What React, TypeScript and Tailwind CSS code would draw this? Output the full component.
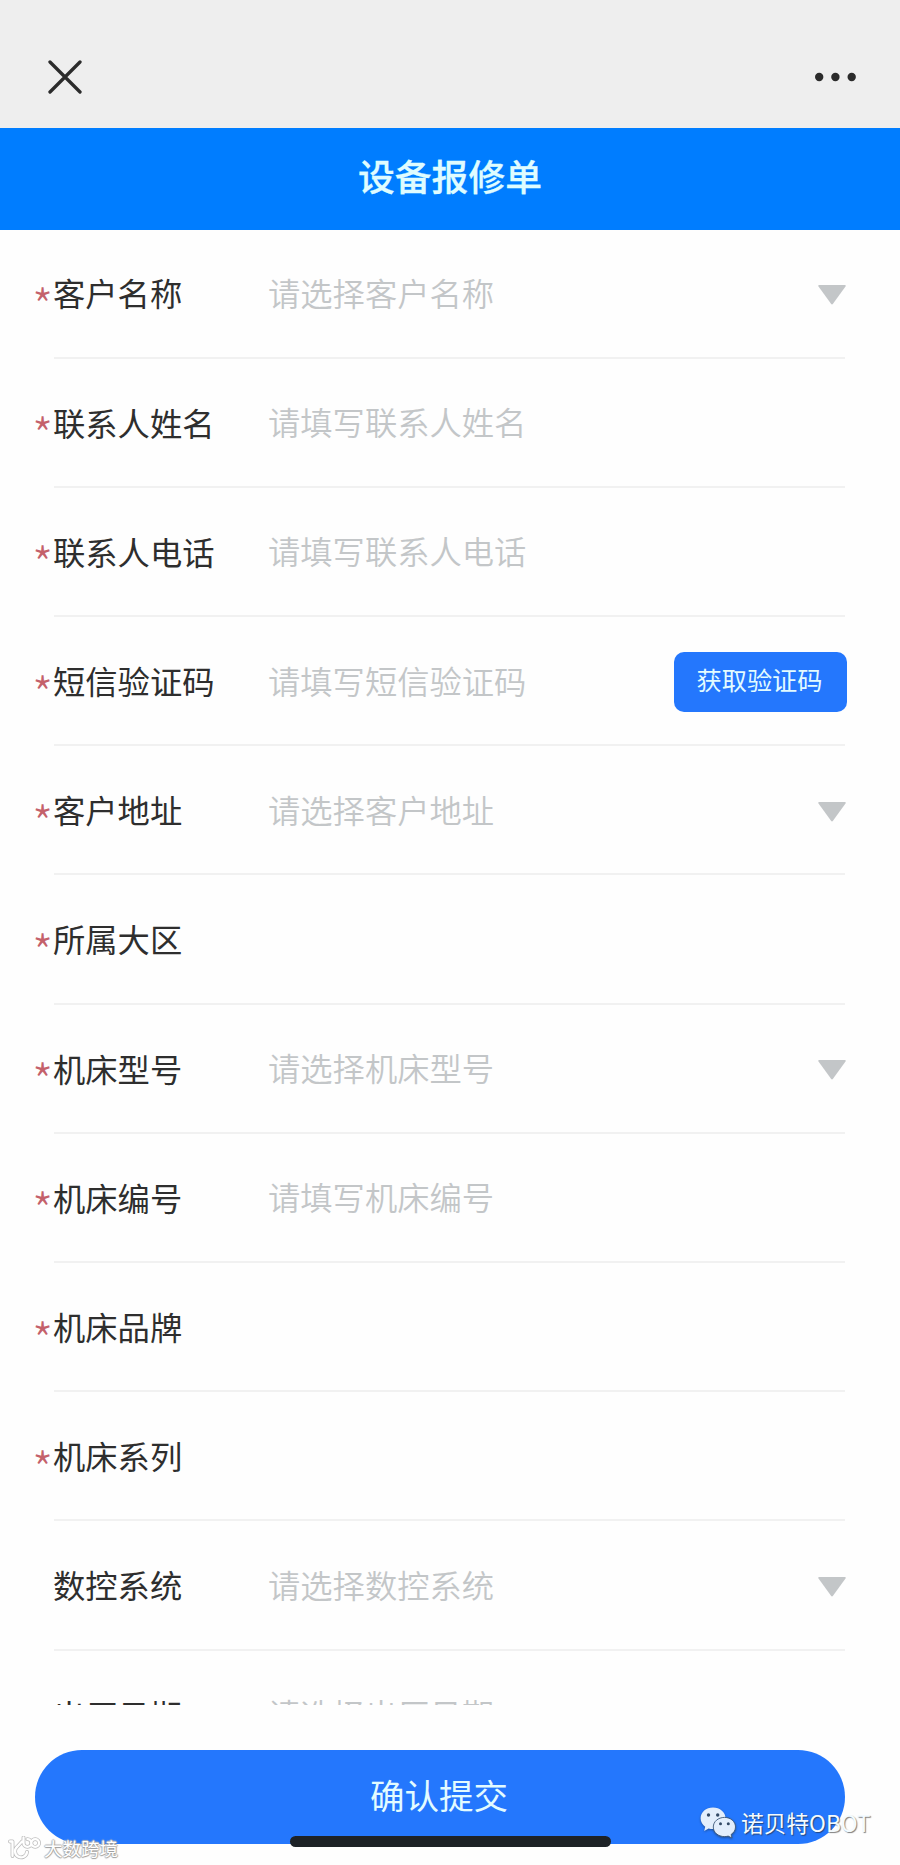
import clsx from "clsx";

// ─── Types ───────────────────────────────────────────────────────────────────

type Field = {
  label: string;
  placeholder?: string;
  required?: boolean;
  kind?: "select" | "code";
};

const FIELDS: Field[] = [
  { label: "客户名称", placeholder: "请选择客户名称", required: true, kind: "select" },
  { label: "联系人姓名", placeholder: "请填写联系人姓名", required: true },
  { label: "联系人电话", placeholder: "请填写联系人电话", required: true },
  { label: "短信验证码", placeholder: "请填写短信验证码", required: true, kind: "code" },
  { label: "客户地址", placeholder: "请选择客户地址", required: true, kind: "select" },
  { label: "所属大区", required: true },
  { label: "机床型号", placeholder: "请选择机床型号", required: true, kind: "select" },
  { label: "机床编号", placeholder: "请填写机床编号", required: true },
  { label: "机床品牌", required: true },
  { label: "机床系列", required: true },
  { label: "数控系统", placeholder: "请选择数控系统", kind: "select" },
  { label: "出厂日期", placeholder: "请选择出厂日期" },
];

// ─── Icons ───────────────────────────────────────────────────────────────────

function CloseIcon() {
  return (
    <svg width="34" height="34" viewBox="0 0 34 34" fill="none">
      <path
        d="M2 2 32 32M32 2 2 32"
        stroke="#2b2b2b"
        strokeWidth="3.3"
        strokeLinecap="round"
      />
    </svg>
  );
}

function MoreIcon() {
  return (
    <svg width="42" height="10" viewBox="0 0 42 10" fill="#2b2b2b">
      <circle cx="4.2" cy="5" r="4.2" />
      <circle cx="20.4" cy="5" r="4.2" />
      <circle cx="36.7" cy="5" r="4.2" />
    </svg>
  );
}

function CaretIcon() {
  return (
    <svg className="-mr-px mt-[4px]" width="28" height="20" viewBox="0 0 28 20" fill="#c3c6c8">
      <path d="M1 0h26q1.2.4.5 1.4L15 18.8q-1 1.2-2 0L.5 1.4Q-.2.4 1 0Z" />
    </svg>
  );
}

function WechatIcon() {
  return (
    <svg
      className="drop-shadow-[0_1px_1px_rgba(30,50,80,0.6)]"
      width="36"
      height="31"
      viewBox="0 0 36 31"
    >
      <path
        d="M13 .5C6 .5.6 5.2.6 11.3c0 3.6 1.8 6.5 4.6 8.5L4.2 24l4.4-2.5c1.4.4 2.8.6 4.4.6 7 0 12.5-4.8 12.5-10.8S20 .5 13 .5Z"
        fill="#e3eefc"
      />
      <path
        d="M24.5 10.4c-6.3 0-11.2 4.2-11.2 9.6s4.9 9.6 11.2 9.6c1.3 0 2.5-.2 3.7-.5l3.8 1.9-.9-3.5c2.7-1.8 4.4-4.4 4.4-7.5 0-5.4-4.8-9.6-11-9.6Z"
        fill="#e3eefc"
        stroke="#3c5878"
        strokeWidth=".9"
      />
      <g fill="#344a66">
        <circle cx="8.5" cy="8" r="1.7" />
        <circle cx="17.7" cy="8" r="1.7" />
        <circle cx="20.5" cy="16.8" r="1.5" />
        <circle cx="28.3" cy="16.8" r="1.5" />
      </g>
    </svg>
  );
}

// "1" and "C" strokes with two raised rings
function HundredIcon() {
  const path =
    "M2 5.5h2.5V20M14 5.5 9.5 10.5a6 6 0 1 0 9.5 5.5M15.5 1.5V7a3.9 3.9 0 1 0 3.9-3.9M23.3 7a3.9 3.9 0 1 0 7.8 0a3.9 3.9 0 1 0-7.8 0";
  return (
    <svg width="34" height="24" viewBox="0 0 34 24" fill="none" strokeLinecap="round" strokeLinejoin="round">
      <path d={path} stroke="#bcbcbc" strokeWidth="3.8" />
      <path d={path} stroke="#fff" strokeWidth="2.3" />
    </svg>
  );
}

// ─── Form row ────────────────────────────────────────────────────────────────

function FieldRow({ label, placeholder, required, kind }: Field) {
  return (
    <div className="flex h-[129.2px] shrink-0 pl-[35px] pr-[55px]">
      <span className="flex w-[19px] shrink-0 items-center pt-[20px] text-[48px] font-light leading-none text-[#c4616b]">
        {required && <span className="-ml-[3px]">*</span>}
      </span>
      <div className="flex flex-1 items-center border-b-2 border-[#f1f1f1] text-[32.3px] leading-none">
        <span className="-ml-px w-[215px] shrink-0 whitespace-nowrap pb-px text-[#2e2e2e]">{label}</span>
        <span className="flex-1 whitespace-nowrap pb-[2px] font-[350] text-[#c3c6c8]">{placeholder}</span>
        {kind === "select" && <CaretIcon />}
        {kind === "code" && (
          <button
            type="button"
            className="-mr-[2px] mt-[2px] h-[60px] w-[173px] shrink-0 rounded-[10px] bg-[#2477fd] pb-[5px] pr-[2px] text-[25.2px] leading-none text-[#e2fbff]"
          >
            获取验证码
          </button>
        )}
      </div>
    </div>
  );
}

// ─── Page ────────────────────────────────────────────────────────────────────

const outlined =
  "[text-shadow:0_1px_1px_#999,1px_0_1px_#aaa,-1px_0_1px_#bbb,0_-1px_1px_#bbb]";

export default function App() {
  return (
    <div className="relative flex h-[1865px] w-[900px] flex-col overflow-hidden bg-[#fefefe] font-['Noto_Sans_CJK_SC',sans-serif]">
      <header className="flex h-[128px] shrink-0 items-start justify-between bg-[#eeeeee] pl-12 pr-[43px] pt-[60px]">
        <CloseIcon />
        <div className="pt-[12px]">
          <MoreIcon />
        </div>
      </header>

      <h1 className="flex h-[101.5px] shrink-0 items-center justify-center bg-[#007dff] pb-[6px] text-[36.8px] font-medium leading-none text-[#dffcff] [-webkit-text-stroke:0.3px_#dffcff]">
        设备报修单
      </h1>

      <main className="flex h-[1475px] shrink-0 flex-col overflow-hidden">
        {FIELDS.map((field) => (
          <FieldRow key={field.label} {...field} />
        ))}
      </main>

      <footer className="pl-[35px] pr-[55px] pt-[45.5px]">
        <button
          type="button"
          className="h-[94px] w-full rounded-full bg-[#2477fd] pb-[6px] pr-[2px] text-[34.5px] leading-none text-[#e2fbff]"
        >
          确认提交
        </button>
      </footer>

      {/* Home indicator */}
      <div className="absolute left-[290px] top-[1836px] h-[11px] w-[321px] rounded-full bg-[#1d2226]" />

      <div className="absolute left-[700px] top-[1807px] flex items-center gap-[5px]">
        <WechatIcon />
        <span
          className={clsx(
            "whitespace-nowrap pt-[2px] text-[22.7px] leading-none text-[#f4fbff]",
            "[text-shadow:1px_1px_1px_rgba(40,40,40,0.6)]",
          )}
        >
          诺贝特OBOT
        </span>
      </div>

      <div className="absolute left-[8px] top-[1836px] flex items-center gap-[2px]">
        <HundredIcon />
        <span className={clsx("whitespace-nowrap text-[18.5px] leading-none text-white", outlined)}>
          大数跨境
        </span>
      </div>
    </div>
  );
}
